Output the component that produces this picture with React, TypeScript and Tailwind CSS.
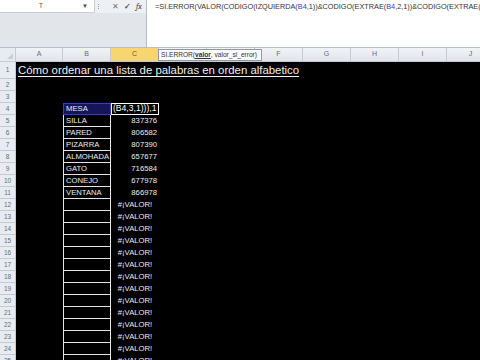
const words: Record<number, [string, string]> = {
  4: ["MESA", "(B4,3,1))),1"],
  5: ["SILLA", "837376"],
  6: ["PARED", "806582"],
  7: ["PIZARRA", "807390"],
  8: ["ALMOHADA", "657677"],
  9: ["GATO", "716584"],
  10: ["CONEJO", "677978"],
  11: ["VENTANA", "866978"],
};

const cols = ["A", "B", "C", "D", "E", "F", "G", "H", "I", "J"];
const rows = Array.from({ length: 25 }, (_, i) => i + 1);

function RowHeader({ n, tall }: { n: number; tall?: boolean }) {
  return (
    <div
      className={`w-[16px] shrink-0 flex items-center justify-center bg-[#e8ebef] border-r border-b border-[#c3cad3] text-[6.5px] text-[#5e6e88] ${
        tall ? "h-[17px]" : "h-[12px]"
      }`}
    >
      {n}
    </div>
  );
}

function Row({ n }: { n: number }) {
  const data = words[n];
  if (n === 1) {
    return (
      <div className="flex h-[17px]">
        <RowHeader n={1} tall />
        <div className="pl-[2px] pt-[1px] text-[11.4px] leading-[15px] text-[#f0f0f0] underline underline-offset-2 whitespace-nowrap">
          Cómo ordenar una lista de palabras en orden alfabetico
        </div>
      </div>
    );
  }
  if (n < 4) {
    return (
      <div className="flex h-[12px]">
        <RowHeader n={n} />
      </div>
    );
  }
  return (
    <div className="flex h-[12px] text-[7.7px] leading-[11px] text-[#ececec]">
      <RowHeader n={n} />
      <div className="w-[47px] shrink-0" />
      {n === 4 ? (
        <div className="w-[48px] shrink-0 bg-[#15155a] border border-[#3a3ad0] pl-[2px] leading-[10px]">
          {data[0]}
        </div>
      ) : (
        <div className="w-[48px] shrink-0 border-x border-b border-[#e4e4e4] pl-[2px] leading-[11px]">
          {data ? data[0] : ""}
        </div>
      )}
      {n === 4 ? (
        <div className="w-[48px] shrink-0 border-[1.5px] border-white pl-[1px] text-[8.6px] leading-[9px] whitespace-nowrap overflow-hidden text-white">
          {data[1]}
        </div>
      ) : data ? (
        <div className="w-[48px] shrink-0 text-right pr-[2px]">{data[1]}</div>
      ) : (
        <div className="w-[48px] shrink-0 text-center">#¡VALOR!</div>
      )}
    </div>
  );
}

export default function App() {
  return (
    <div
      className="relative w-[480px] h-[360px] overflow-hidden bg-black"
      style={{ fontFamily: '"Liberation Sans", Arial, sans-serif' }}
    >
      {/* formula bar */}
      <div className="flex h-[48px] border-b border-[#b7bec8]">
        <div className="w-[147px] shrink-0 flex flex-col bg-[#e2e5e9] border-r border-[#b7bec8]">
          <div className="flex h-[13px]">
            <div className="w-[95px] shrink-0 bg-white flex items-center border-r border-b border-[#c9ced6]">
              <span className="flex-1 text-center text-[7px] text-[#555]">T</span>
              <span className="w-[12px] text-[6px] text-[#444]">▼</span>
            </div>
            <div className="flex-1 flex items-center gap-[5px] pl-[3px] bg-[#eef0f3]">
              <span className="flex flex-col gap-[1px]">
                <span className="w-[1px] h-[1px] bg-[#9aa3ad]" />
                <span className="w-[1px] h-[1px] bg-[#9aa3ad]" />
                <span className="w-[1px] h-[1px] bg-[#9aa3ad]" />
              </span>
              <span className="ml-[8px] text-[8px] leading-none text-[#6c737c]">✕</span>
              <span className="text-[8px] leading-none font-bold text-[#4a5058]">✓</span>
              <span className="text-[8px] leading-none italic text-[#444] font-serif">fx</span>
            </div>
          </div>
          <div className="flex-1" />
        </div>
        <div className="flex-1 bg-white pl-[8px] pt-[2px] text-[7.3px] leading-[10px] text-[#333] whitespace-nowrap overflow-hidden">
          =SI.ERROR(VALOR(CODIGO(IZQUIERDA(<span className="text-[#3a3ad0]">B4</span>,1))&amp;CODIGO(EXTRAE(
          <span className="text-[#3a3ad0]">B4</span>,2,1))&amp;CODIGO(EXTRAE(<span className="text-[#3a3ad0]">B4</span>
          ,3,1))),1)
        </div>
      </div>

      {/* column headers */}
      <div className="flex h-[14px] bg-[#e8ebef]">
        <div className="w-[16px] shrink-0 border-r border-b border-[#c3cad3] flex items-end justify-end p-[2px]">
          <div className="w-0 h-0 border-l-[6px] border-l-transparent border-b-[6px] border-b-[#c9cfd6]" />
        </div>
        {cols.map((c, i) => (
          <div
            key={c}
            className={`shrink-0 flex items-center justify-center text-[7px] border-r border-b border-[#c3cad3] ${
              i === 0 ? "w-[47px]" : "w-[48px]"
            } ${c === "C" ? "bg-[#f8d56e] text-[#6a5a30]" : "bg-gradient-to-b from-[#f1f3f6] to-[#e1e5ea] text-[#5e6e88]"}`}
          >
            {c}
          </div>
        ))}
      </div>

      {/* argument tooltip */}
      <div className="absolute left-[158px] top-[49px] h-[12px] w-[104px] px-[2px] flex items-center bg-[#fafafa] border border-[#8f98a3] text-[6.6px] text-[#333] whitespace-nowrap">
        SI.ERROR(<span className="font-bold underline">valor</span>, valor_si_error)
      </div>

      {/* sheet */}
      <div className="flex flex-col">
        {rows.map((n) => (
          <Row key={n} n={n} />
        ))}
      </div>
    </div>
  );
}
